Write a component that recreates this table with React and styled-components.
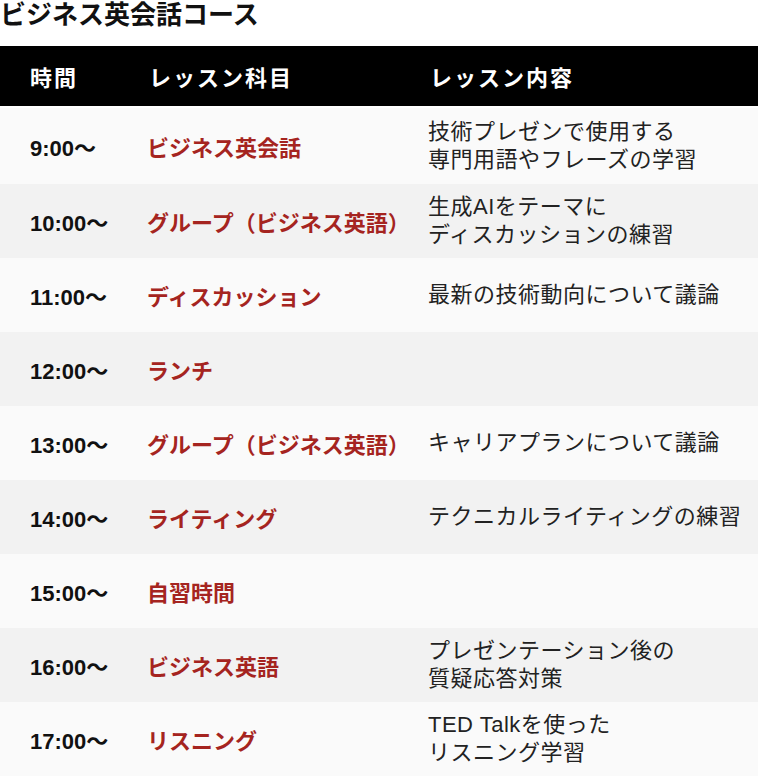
import styled, { createGlobalStyle } from "styled-components";

const GlobalStyle = createGlobalStyle`
  body {
    margin: 0;
    background: #fff;
    font-family: "Liberation Sans", "Noto Sans CJK JP", sans-serif;
  }
`;

const schedule = [
  { time: "9:00〜", subject: "ビジネス英会話", content: ["技術プレゼンで使用する", "専門用語やフレーズの学習"] },
  { time: "10:00〜", subject: "グループ（ビジネス英語）", content: ["生成AIをテーマに", "ディスカッションの練習"] },
  { time: "11:00〜", subject: "ディスカッション", content: ["最新の技術動向について議論"] },
  { time: "12:00〜", subject: "ランチ", content: [] },
  { time: "13:00〜", subject: "グループ（ビジネス英語）", content: ["キャリアプランについて議論"] },
  { time: "14:00〜", subject: "ライティング", content: ["テクニカルライティングの練習"] },
  { time: "15:00〜", subject: "自習時間", content: [] },
  { time: "16:00〜", subject: "ビジネス英語", content: ["プレゼンテーション後の", "質疑応答対策"] },
  { time: "17:00〜", subject: "リスニング", content: ["TED Talkを使った", "リスニング学習"] },
];

const Page = styled.div`
  width: 758px;
`;

const Title = styled.h1`
  margin: 0 0 16px;
  font-size: 26px;
  line-height: 30px;
  font-weight: 700;
  color: #111;
`;

const Table = styled.div`
  display: grid;
  grid-template-columns: 147px 281px 1fr;
`;

const HeaderRow = styled.div`
  display: contents;
`;

const HeadCell = styled.div`
  background: #000;
  color: #fff;
  height: 60px;
  display: flex;
  align-items: center;
  padding-left: ${(p) => (p.$first ? "30px" : "2px")};
  margin-bottom: 2px;
  font-size: 22px;
  font-weight: 700;
  letter-spacing: 2px;
`;

const Row = styled.div`
  display: contents;
  & > div {
    background: ${(p) => (p.$alt ? "#f2f2f2" : "#fafafa")};
    height: ${(p) => (p.$first ? "76px" : "74px")};
  }
`;

const Cell = styled.div`
  display: flex;
  flex-direction: column;
  justify-content: center;
`;

const TimeCell = styled(Cell)`
  padding-left: 30px;
  font-size: 22px;
  font-weight: 700;
  color: #111;
`;

const SubjectCell = styled(Cell)`
  font-size: 22px;
  font-weight: 700;
  color: #a52420;
`;

const ContentCell = styled(Cell)`
  font-size: 22px;
  line-height: 28px;
  letter-spacing: 0.5px;
  color: #222;
`;

export default function App() {
  return (
    <Page>
      <GlobalStyle />
      <Title>ビジネス英会話コース</Title>
      <Table>
        <HeaderRow>
          <HeadCell $first>時間</HeadCell>
          <HeadCell>レッスン科目</HeadCell>
          <HeadCell>レッスン内容</HeadCell>
        </HeaderRow>
        {schedule.map((item, i) => (
          <Row key={item.time} $alt={i % 2 === 1} $first={i === 0}>
            <TimeCell>{item.time}</TimeCell>
            <SubjectCell>{item.subject}</SubjectCell>
            <ContentCell>
              {item.content.map((line) => (
                <span key={line}>{line}</span>
              ))}
            </ContentCell>
          </Row>
        ))}
      </Table>
    </Page>
  );
}
